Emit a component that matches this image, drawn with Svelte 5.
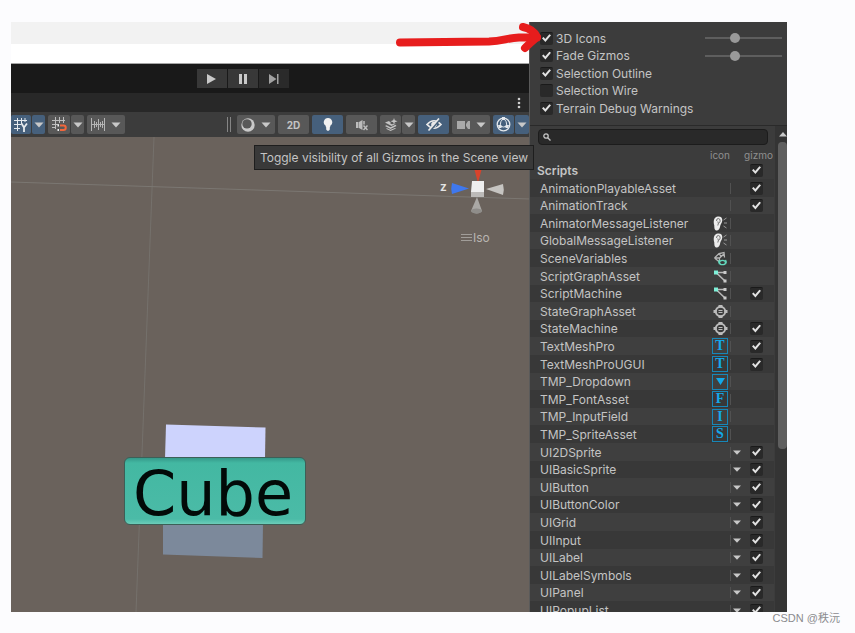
<script>
	const options = $state([
		{ id: 'icons', label: '3D Icons', on: true, slider: 37 },
		{ id: 'fade', label: 'Fade Gizmos', on: true, slider: 37 },
		{ id: 'outline', label: 'Selection Outline', on: true },
		{ id: 'wire', label: 'Selection Wire', on: false },
		{ id: 'terrain', label: 'Terrain Debug Warnings', on: true }
	]);

	// gizmo: undefined means the script has no gizmo toggle
	const scripts = $state([
		{ name: 'AnimationPlayableAsset', gizmo: true },
		{ name: 'AnimationTrack', gizmo: true },
		{ name: 'AnimatorMessageListener', icon: 'ear' },
		{ name: 'GlobalMessageListener', icon: 'ear' },
		{ name: 'SceneVariables', icon: 'vars' },
		{ name: 'ScriptGraphAsset', icon: 'graph' },
		{ name: 'ScriptMachine', icon: 'graph', gizmo: true },
		{ name: 'StateGraphAsset', icon: 'state' },
		{ name: 'StateMachine', icon: 'state', gizmo: true },
		{ name: 'TextMeshPro', tmp: 'T', gizmo: true },
		{ name: 'TextMeshProUGUI', tmp: 'T', gizmo: true },
		{ name: 'TMP_Dropdown', icon: 'drop' },
		{ name: 'TMP_FontAsset', tmp: 'F' },
		{ name: 'TMP_InputField', tmp: 'I' },
		{ name: 'TMP_SpriteAsset', tmp: 'S' },
		{ name: 'UI2DSprite', menu: true, gizmo: true },
		{ name: 'UIBasicSprite', menu: true, gizmo: true },
		{ name: 'UIButton', menu: true, gizmo: true },
		{ name: 'UIButtonColor', menu: true, gizmo: true },
		{ name: 'UIGrid', menu: true, gizmo: true },
		{ name: 'UIInput', menu: true, gizmo: true },
		{ name: 'UILabel', menu: true, gizmo: true },
		{ name: 'UILabelSymbols', menu: true, gizmo: true },
		{ name: 'UIPanel', menu: true, gizmo: true },
		{ name: 'UIPopupList', menu: true, gizmo: true }
	]);

	let allScripts = $state(true);
	let search = $state('');
</script>

{#snippet caret()}
	<svg class="caret" width="10" height="6" viewBox="0 0 10 6"><path d="M.5.5h9L5 5.5z" fill="#c8c8c8" /></svg>
{/snippet}

<div class="page">
	<div class="editor">
		<div class="strip"></div>
		<div class="gap"></div>

		<div class="playbar">
			<button aria-label="Play"><svg width="12" height="12" viewBox="0 0 12 12"><path d="M1 1l9 5-9 5z" fill="#c9c9c9" /></svg></button>
			<button aria-label="Pause"><svg width="12" height="12" viewBox="0 0 12 12"><path d="M2 1h3v10H2zM7 1h3v10H7z" fill="#c9c9c9" /></svg></button>
			<button class="dim" aria-label="Step"><svg width="12" height="12" viewBox="0 0 12 12"><path d="M1 1l7.500 5L1 11zM9 1h1.500v10H9z" fill="#a2a2a2" /></svg></button>
		</div>

		<div class="tabs">
			<button aria-label="More options"><svg width="4" height="12" viewBox="0 0 4 12" fill="#cfcfcf"><circle cx="2" cy="2" r="1.300" /><circle cx="2" cy="6" r="1.300" /><circle cx="2" cy="10" r="1.300" /></svg></button>
		</div>

		<div class="toolbar">
			<div class="pair on first">
				<button class="w20" aria-label="Grid visibility">
					<svg width="14" height="14" viewBox="0 0 14 14" fill="none" stroke="#e6eaee">
						<path d="M3.500 0v13M7.500 0v6M11 0v4M0 2.500h13M0 6.500h7M0 10.500h6" />
						<path d="M7.500 5.500l2.500 4 3-4M10 9v5" stroke-width="1.800" />
					</svg>
				</button>
				<button class="w13" aria-label="Grid settings">{@render caret()}</button>
			</div>
			<div class="pair">
				<button class="w22" aria-label="Grid snapping">
					<svg width="15" height="15" viewBox="0 0 15 15" fill="none" stroke="#bdbdbd">
						<path d="M3.500 0v12M7.500 0v6M11.500 0v6M0 3.500h13M0 7.500h7M0 10.500h4" />
						<path d="M8 8.500h3.500a2.200 2.200 0 0 1 0 4.500H8" stroke="#f2663b" stroke-width="2" />
						<path d="M5.500 8.500H7M5.500 13H7" stroke="#eee" stroke-width="2" />
					</svg>
				</button>
				<button class="w13" aria-label="Snap settings">{@render caret()}</button>
			</div>
			<button class="w38" aria-label="Snap increment">
				<svg width="14" height="13" viewBox="0 0 14 13" stroke="#b4b4b4"><path d="M.5 0v13M13.500 0v13M1 6.500h12M3.500 3v7M5.500 4v5M7.500 1v11M9.500 4v5M11.500 3v7" /></svg>
				{@render caret()}
			</button>

			<div class="right">
				<span class="grip"></span>
				<button class="w38" aria-label="Draw mode">
					<svg width="14" height="14" viewBox="0 0 14 14"><circle cx="7" cy="7" r="6.700" fill="#c9c9c9" /><circle cx="6" cy="5.900" r="4.700" fill="#585858" /></svg>
					{@render caret()}
				</button>
				<button class="w31 text">2D</button>
				<button class="w31 on" aria-label="Scene lighting">
					<svg width="10" height="13" viewBox="0 0 10 13" fill="#f1f1f1"><path d="M5 0a4.200 4.200 0 0 1 2.500 7.600L7 9.200H3l-.5-1.600A4.200 4.200 0 0 1 5 0zM3.200 9.200h3.600v2.300L5.800 12.800H4.200l-1-1.300z" /></svg>
				</button>
				<button class="w31" aria-label="Scene audio">
					<svg width="13" height="12" viewBox="0 0 13 12"><path d="M1 3h2.500v6H1zM4 3l3.500-2v10L4 9z" fill="#bcbcbc" /><path d="M9 2v3.500M8.500 6.500l4 4.500M12.500 6.500l-4 4.500" stroke="#bcbcbc" stroke-width="1.500" fill="none" /></svg>
				</button>
				<div class="pair">
					<button class="w21" aria-label="Scene effects">
						<svg width="14" height="13" viewBox="0 0 14 13" fill="#c4c4c4"><path d="M1 4.500l4-1.500 2 2-1 .5 2 .8 4-.8-4.500 2.500zM1 8l1.500-.8 4 2 5-2.500L12.500 8l-6 3zM2 10.800l1-.6 3.500 1.500L11 10l1 .5-5.500 2.400z" /><path d="M10 0l.8 2.300 2.700.9-2.700 1L10 6.500l-.8-2.300-2.700-1 2.700-.9z" /></svg>
					</button>
					<button class="w13" aria-label="Effect settings">{@render caret()}</button>
				</div>
				<button class="w31 on" aria-label="Scene visibility">
					<svg width="16" height="13" viewBox="0 0 16 13"><path d="M1 6.500Q8-1 15 6.500 8 14 1 6.500z" fill="none" stroke="#e8e8e8" stroke-width="1.700" /><circle cx="8" cy="6.500" r="2.800" fill="#e8e8e8" /><path d="M4 13L14 1" stroke="#466079" stroke-width="2" /><path d="M2.500 12.500L13 .5" stroke="#e8e8e8" stroke-width="1.700" /></svg>
				</button>
				<button class="w38" aria-label="Scene camera">
					<svg width="13" height="10" viewBox="0 0 13 10" fill="#a9a9a9"><path d="M0 1h8v8H0zM9 4l2-3h2v8h-2L9 6z" /></svg>
					{@render caret()}
				</button>
				<div class="pair on">
					<button class="w21" aria-label="Gizmos">
						<svg width="15" height="15" viewBox="0 0 15 15" fill="none" stroke="#e4e8ec"><circle cx="7.500" cy="7.500" r="6.300" stroke-width="1.300" /><path d="M7.500 1Q4 4 4 9.500M7.500 1Q11 4 11 9.500M1.200 8.500q6.300 3 12.600 0" /><path d="M6 0h3v3H6zM2.500 8h3v3h-3zM9.500 8h3v3h-3z" fill="#e4e8ec" stroke="none" /></svg>
					</button>
					<button class="w14" aria-label="Gizmo settings">{@render caret()}</button>
				</div>
			</div>
		</div>

		<div class="scene">
			<svg class="world" width="519" height="475" viewBox="0 0 519 475">
				<path d="M143 0L125 475" stroke="#75716c" fill="none" />
				<path d="M0 45L519 62" stroke="#7b7772" fill="none" />
				<path d="M155 287.500l99.500 3-.5 31H154z" fill="#cdd3fd" />
				<path d="M152 386h100l-.5 35-99.500-3.500z" fill="#7c899b" />
			</svg>
			<div class="name">Cube</div>
			<div class="axis">
				<svg width="66" height="54" viewBox="0 0 66 54">
					<path d="M34 8h8l-3.500 13h-1z" fill="#d8432c" />
					<path d="M12 23l17 5.500L12 34q-1.500-5.500 0-11z" fill="#3f78ee" />
					<path d="M63 24l-17 5 17 6q1.500-5.500 0-11z" fill="#c6c4c1" />
					<path d="M37 37l-6 14q6 5 11 0z" fill="#aaa8a5" />
					<ellipse cx="36.500" cy="51" rx="5.500" ry="2.500" fill="#8f8d8a" />
					<path d="M32 21h12v11H31z" fill="#eee" />
					<path d="M31 32h13v5H31z" fill="#bcbab8" />
				</svg>
				<span class="z">z</span>
				<button class="iso"><svg width="11" height="8" viewBox="0 0 11 8"><path d="M0 .5h11M0 3.500h11M0 6.500h11" stroke="#a19d99" /></svg>Iso</button>
			</div>
		</div>
		<div class="tooltip" role="tooltip">Toggle visibility of all Gizmos in the Scene view</div>
	</div>

	<aside class="panel">
		<div class="options">
			{#each options as o}
				<div class="option">
					<input type="checkbox" id={o.id} bind:checked={o.on} />
					<label for={o.id}>{o.label}</label>
					{#if o.slider}
						<input type="range" aria-label={o.label} bind:value={o.slider} />
					{/if}
				</div>
			{/each}
		</div>

		<div class="lower">
			<div class="list">
				<div class="search">
					<svg width="8" height="8" viewBox="0 0 8 8" fill="none" stroke="#c4c4c4" stroke-width="1.300"><circle cx="3" cy="3" r="2.200" /><path d="M4.700 4.700L7.500 7.500" /></svg>
					<input type="text" aria-label="Search" bind:value={search} />
				</div>
				<table>
					<thead>
						<tr class="heads">
							<th></th>
							<th class="icon">icon</th>
							<th class="menu"></th>
							<th class="gizmo">gizmo</th>
						</tr>
						<tr class="group">
							<th colspan="3">Scripts</th>
							<td class="gizmo"><input type="checkbox" aria-label="All scripts" bind:checked={allScripts} /></td>
						</tr>
					</thead>
					<tbody>
						{#each scripts as s}
							<tr>
								<td class="script">{s.name}</td>
								<td class="icon">
									{#if s.tmp}
										<span class="tmp">{s.tmp}</span>
									{:else if s.icon === 'drop'}
										<span class="tmp"><svg width="9" height="7" viewBox="0 0 9 7"><path d="M0 0h9L4.500 7z" fill="#13a9ea" /></svg></span>
									{:else if s.icon === 'ear'}
										<svg width="15" height="15" viewBox="0 0 15 15">
											<path d="M5 .5C8 .3 9.500 2 9.300 4.500 9 7 7.500 8 7.200 10 7 12.500 5.500 14.500 3.700 14.500 1.500 14.500 1.300 12 1.300 9.500 0 5 1 .8 5 .5z" fill="#ececec" />
											<path d="M3.500 5Q3.500 2.500 5.300 2.500T7.200 5Q7 6.500 5.500 7.500M4.800 5.500Q6 7 4.800 9.500" stroke="#666" stroke-width=".9" fill="none" />
											<path d="M10.500 4l3-2M11 7h3M10.500 10l3 2" stroke="#999" />
										</svg>
									{:else if s.icon === 'vars'}
										<svg width="15" height="15" viewBox="0 0 15 15" fill="none">
											<path d="M1.500 7L6 2.500l5-1 .5 5M1.500 7l5 4M1.500 7h5l5-4.500M6.500 7v3M6 2.500L8.500 6" stroke="#b5b5b5" stroke-width="1.300" />
											<path d="M6.500 9q-1.500 2 0 4M12.500 9q1.500 2 0 4" stroke="#63d8bd" stroke-width="1.300" />
											<ellipse cx="9.500" cy="11.500" rx="3" ry="2.200" stroke="#63d8bd" stroke-width="1.300" />
										</svg>
									{:else if s.icon === 'graph'}
										<svg width="15" height="15" viewBox="0 0 15 15">
											<path d="M3 3.500h9M3 3.500l9 8.500" stroke="#b9b9b9" stroke-width="1.600" />
											<path d="M1 1.500h4v4H1z" fill="#7ff0d8" />
											<path d="M10.500 2h3v3h-3zM10.500 10.500h3v3h-3z" fill="#cacaca" />
										</svg>
									{:else if s.icon === 'state'}
										<svg width="15" height="15" viewBox="0 0 15 15" fill="none">
											<circle cx="7.500" cy="7.500" r="4.700" stroke="#bcbcbc" stroke-width="1.900" />
											<path d="M5.500 6.500h4M5.500 8.500h4" stroke="#bcbcbc" />
											<path d="M5.500 1h4v2.500h-4zM5.500 11.500h4V14h-4zM.5 6h3v3h-3zM11.500 6h3v3h-3z" fill="#bcbcbc" />
										</svg>
									{/if}
								</td>
								<td class="menu">
									{#if s.menu}<button aria-label="Icon for {s.name}"><svg width="8" height="5" viewBox="0 0 8 5"><path d="M0 .5h8L4 4.800z" fill="#c8c8c8" /></svg></button>{/if}
								</td>
								<td class="gizmo">
									{#if s.gizmo !== undefined}<input type="checkbox" aria-label="Gizmo for {s.name}" bind:checked={s.gizmo} />{/if}
								</td>
							</tr>
						{/each}
					</tbody>
				</table>
			</div>
			<div class="scroll">
				<svg width="8" height="5" viewBox="0 0 8 5"><path d="M4 0l4 4.500H0z" fill="#c8c8c8" /></svg>
				<div class="thumb"></div>
			</div>
		</div>
	</aside>

	<svg class="arrow" width="150" height="32" viewBox="0 0 150 32" fill="none" stroke="#e71d1d" stroke-width="8" stroke-linecap="round" stroke-linejoin="round">
		<path d="M5 20.500Q50 20 94 19.500C108 19 112 16 124 15.500h18" />
		<path d="M128 5q10 2 14 10-7 6-12 11" />
	</svg>
	<div class="watermark">CSDN @秩沅</div>
</div>

<style>
	:global(body) {
		margin: 0;
		background: #fcfcfe;
	}

	.page {
		position: relative;
		box-sizing: border-box;
		display: flex;
		height: 100vh;
		padding: 22px 68px 21px 11px;
		font-family: Inter, "Liberation Sans", sans-serif;
		font-size: 12px;
		color: #c4c4c4;
	}

	button {
		display: flex;
		align-items: center;
		justify-content: center;
		padding: 0;
		border: 0;
		background: none;
		color: inherit;
		font: inherit;
	}

	svg {
		display: block;
		flex: none;
	}

	/* editor */
	.editor {
		position: relative;
		flex: 1;
		min-width: 0;
		display: flex;
		flex-direction: column;
	}
	.strip {
		height: 22px;
		background: #f2f2f2;
	}
	.gap {
		height: 19px;
		background: #fff;
		border-bottom: 1px solid #a5a5a5;
	}
	.playbar {
		display: flex;
		align-items: center;
		gap: 1px;
		height: 29px;
		padding-left: 36%;
		background: #191919;
	}
	.playbar button {
		width: 30px;
		height: 19px;
		background: #383838;
	}
	.playbar .dim {
		background: #2a2a2a;
	}
	.tabs {
		display: flex;
		align-items: center;
		justify-content: flex-end;
		height: 19px;
		padding-right: 8px;
		background: #282828;
	}
	.toolbar {
		display: flex;
		align-items: center;
		gap: 3px;
		height: 25px;
		background: #3c3c3c;
	}
	.toolbar button {
		height: 19px;
		gap: 6px;
		background: #585858;
		border-radius: 2px;
	}
	.toolbar .on,
	.toolbar .on button {
		background: #46607c;
	}
	.toolbar .pair {
		display: flex;
		gap: 1px;
		background: none;
	}
	.right {
		display: flex;
		align-items: center;
		gap: 3px;
		margin-left: auto;
	}
	.grip {
		width: 2px;
		height: 15px;
		margin-right: 3px;
		border: solid #858585;
		border-width: 0 1px;
	}
	.w13 { width: 13px; }
	.w14 { width: 14px; }
	.w20 { width: 20px; }
	.w21 { width: 21px; }
	.w22 { width: 22px; }
	.w31 { width: 31px; }
	.w38 { width: 38px; }
	.toolbar .text {
		font-size: 10px;
		font-weight: 700;
	}

	/* scene view */
	.scene {
		position: relative;
		flex: 1;
		overflow: hidden;
		background: #6a625c;
	}
	.world {
		position: absolute;
		top: 0;
		left: 0;
	}
	.name {
		position: absolute;
		top: 320px;
		left: 113px;
		box-sizing: border-box;
		width: 182px;
		height: 68px;
		padding-right: 4px;
		border: 1px solid #3c5f57;
		border-radius: 6px;
		background: linear-gradient(#35998a, #43b8a2 5px, #4bbba7 61px, #6ccdb9);
		color: #020a08;
		font: 62px/72px "DejaVu Sans", sans-serif;
		text-align: center;
	}
	.axis {
		position: absolute;
		top: 23px;
		right: 23px;
		width: 66px;
	}
	.z {
		position: absolute;
		top: 20px;
		left: 0;
		font-weight: 600;
		line-height: 14px;
		color: #e4e4e4;
	}
	.iso {
		gap: 1px;
		margin: 16px 0 0 21px;
		line-height: 16px;
		color: #b9b5b1;
	}
	.tooltip {
		position: absolute;
		z-index: 2;
		top: 123px;
		right: -5px;
		padding: 0 5px;
		border: 1px solid #1e1e1e;
		background: #393939;
		line-height: 23px;
		white-space: nowrap;
	}

	/* gizmo panel */
	.panel {
		display: flex;
		flex-direction: column;
		box-sizing: border-box;
		width: 258px;
		border-left: 1px solid #5a5a5a;
		background: #3c3c3c;
	}
	.options {
		padding: 7px 5px 8px 10px;
		border-bottom: 1px solid #2a2a2a;
	}
	.option {
		display: flex;
		align-items: center;
		height: 18px;
	}
	.option:nth-child(2n) {
		height: 17px;
	}
	.option label {
		margin-left: 3px;
	}
	input[type='checkbox'] {
		appearance: none;
		display: block;
		flex: none;
		width: 13px;
		height: 13px;
		margin: 0;
		border-top: 1px solid #1a1a1a;
		border-radius: 2px;
		background: #292929;
	}
	input[type='checkbox']:checked::before {
		content: '';
		display: block;
		width: 9px;
		height: 9px;
		margin: 1px 2px;
		background: #e2e2e2;
		clip-path: polygon(0 52%, 18% 38%, 36% 62%, 82% 8%, 100% 20%, 38% 94%);
	}
	input[type='range'] {
		appearance: none;
		width: 77px;
		height: 10px;
		margin: 0 0 0 auto;
		background: linear-gradient(#5e5e5e, #5e5e5e) center / 100% 2px no-repeat;
	}
	input[type='range']::-webkit-slider-thumb {
		appearance: none;
		width: 10px;
		height: 10px;
		border-radius: 50%;
		background: #999;
	}

	.lower {
		display: flex;
		flex: 1;
		min-height: 0;
	}
	.list {
		flex: 1;
		padding-right: 1px;
		overflow: hidden;
	}
	.search {
		display: flex;
		align-items: center;
		gap: 4px;
		height: 14px;
		margin: 3px 6px 4px 8px;
		padding-left: 4px;
		border: 1px solid #1c1c1c;
		border-radius: 4px;
		background: #292929;
	}
	.search input {
		flex: 1;
		min-width: 0;
		height: 12px;
		padding: 0;
		border: 0;
		outline: 0;
		background: none;
		color: inherit;
		font: inherit;
	}

	table {
		width: 100%;
		table-layout: fixed;
		border-collapse: collapse;
	}
	th,
	td {
		height: 18px;
		padding: 0;
		line-height: 17px;
		text-align: left;
		vertical-align: middle;
	}
	tbody tr:nth-child(5n + 2) td,
	tbody tr:nth-child(5n + 4) td {
		height: 17px;
	}
	tbody tr {
		background: #3f3f3f;
	}
	tbody tr:nth-child(odd) {
		background: #383838;
	}
	.heads th {
		height: 12px;
		line-height: 12px;
		font-size: 10px;
		font-weight: 400;
		color: #8f8f8f;
		text-align: center;
	}
	.group th {
		padding-left: 7px;
		font-weight: 600;
	}
	td.script {
		padding-left: 10px;
	}
	.icon {
		width: 22px;
	}
	.menu {
		width: 12px;
	}
	.gizmo {
		width: 31px;
	}
	td.icon {
		background: linear-gradient(#515151, #515151) right center / 1px 11px no-repeat;
	}
	td.icon > *,
	td.menu > * {
		margin: 0 auto;
	}
	td.gizmo input {
		margin-left: 7px;
	}
	.tmp {
		display: flex;
		align-items: center;
		justify-content: center;
		box-sizing: border-box;
		width: 16px;
		height: 16px;
		border: 1px solid #1787b8;
		color: #13a9ea;
		font: bold 14px/14px "Liberation Serif", serif;
	}

	.scroll {
		display: flex;
		flex-direction: column;
		align-items: center;
		width: 9px;
		padding: 6px 0 0 3px;
		background: #343434;
	}
	.thumb {
		width: 9px;
		height: 64%;
		margin-top: 5px;
		border-radius: 4px;
		background: #5f5f5f;
	}

	.arrow {
		position: absolute;
		z-index: 3;
		top: 22px;
		left: 395px;
		pointer-events: none;
	}
	.watermark {
		position: absolute;
		right: 15px;
		bottom: 7px;
		font-family: "Liberation Sans", "Noto Sans CJK SC", sans-serif;
		font-size: 11px;
		line-height: 16px;
		color: #8b8b8f;
	}
</style>
